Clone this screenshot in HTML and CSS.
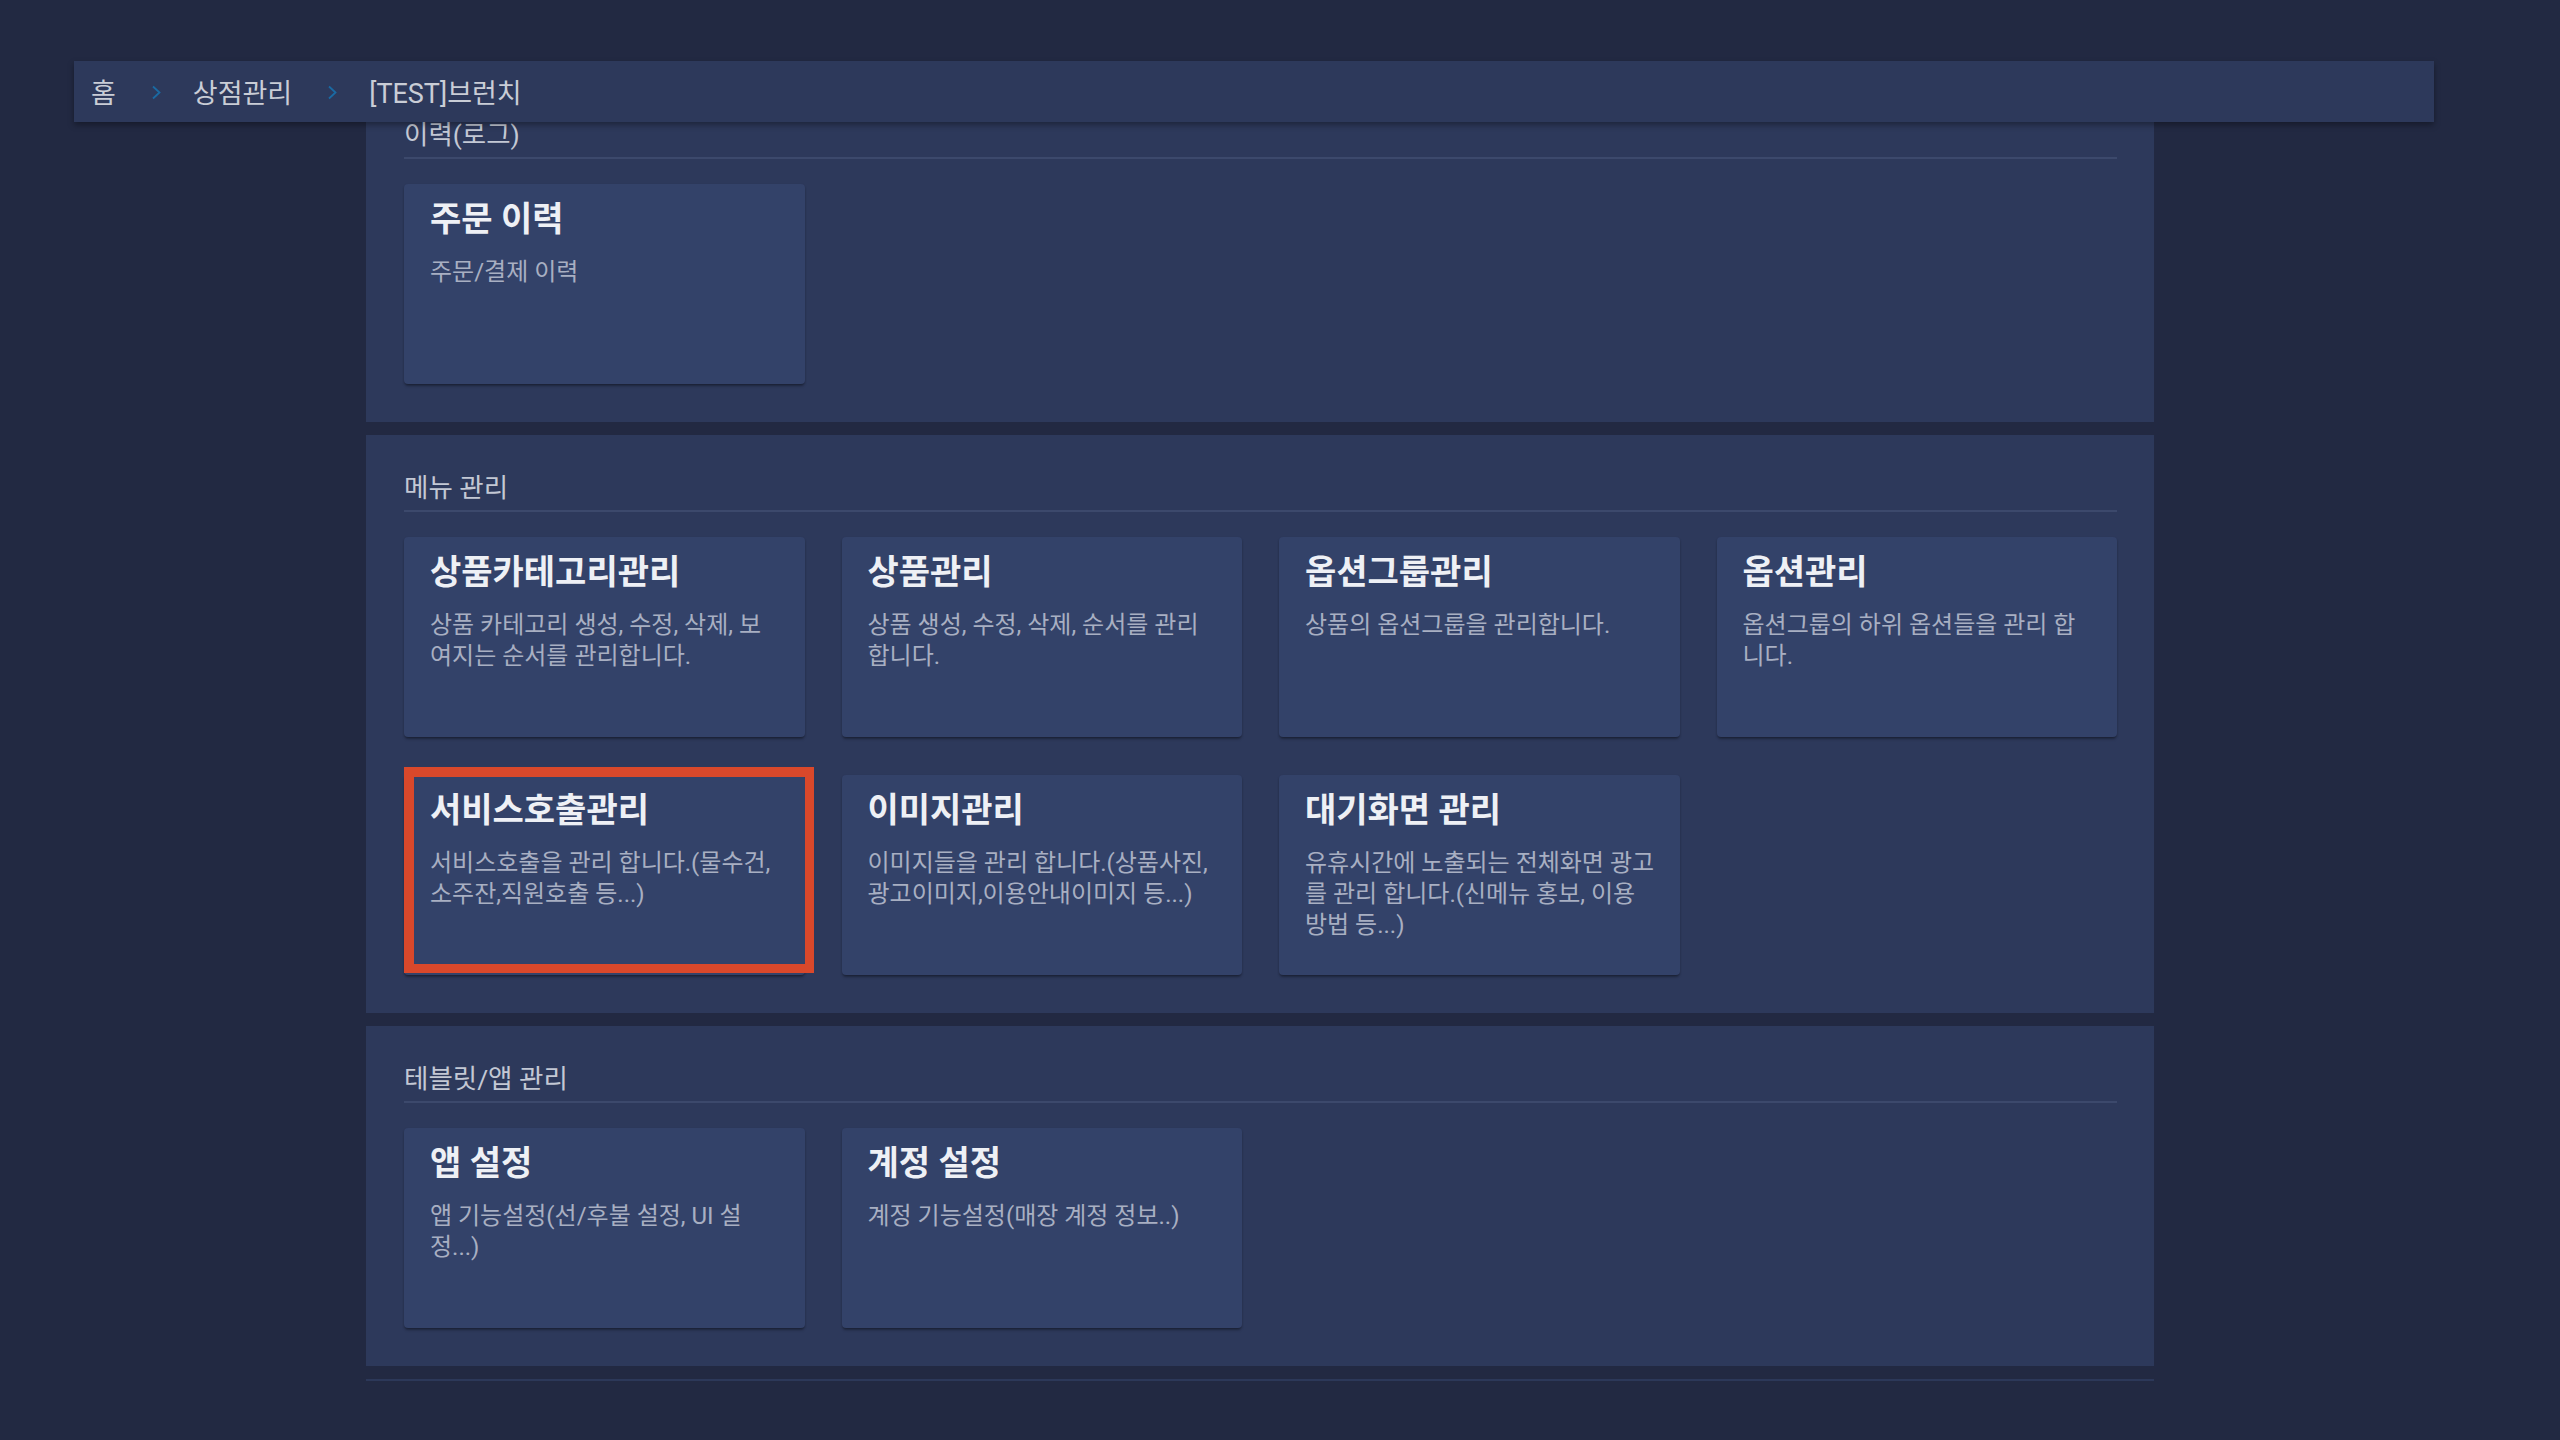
FILE: index.html
```html
<!DOCTYPE html>
<html lang="ko">
<head>
<meta charset="utf-8">
<title>상점관리 - [TEST]브런치</title>
<link rel="stylesheet" href="styles.css">
</head>
<body>
<header class="crumbs">
  <span class="crumb">홈</span>
  <svg class="sep" viewBox="0 0 13 14"><polyline points="3,1 9.5,7 3,13"/></svg>
  <span class="crumb">상점관리</span>
  <svg class="sep" viewBox="0 0 13 14"><polyline points="3,1 9.5,7 3,13"/></svg>
  <span class="crumb">[TEST]브런치</span>
</header>

<main class="content">
  <section class="group">
    <h2 class="group-title">이력(로그)</h2>
    <div class="cards">
      <div class="card"><h3 class="card-title">주문 이력</h3><p class="card-desc">주문/결제 이력</p></div>
    </div>
  </section>

  <section class="group">
    <h2 class="group-title">메뉴 관리</h2>
    <div class="cards">
      <div class="card"><h3 class="card-title">상품카테고리관리</h3><p class="card-desc">상품 카테고리 생성, 수정, 삭제, 보여지는 순서를 관리합니다.</p></div>
      <div class="card"><h3 class="card-title">상품관리</h3><p class="card-desc">상품 생성, 수정, 삭제, 순서를 관리 합니다.</p></div>
      <div class="card"><h3 class="card-title">옵션그룹관리</h3><p class="card-desc">상품의 옵션그룹을 관리합니다.</p></div>
      <div class="card"><h3 class="card-title">옵션관리</h3><p class="card-desc">옵션그룹의 하위 옵션들을 관리 합니다.</p></div>
      <div class="card selected"><h3 class="card-title">서비스호출관리</h3><p class="card-desc">서비스호출을 관리 합니다.(물수건, 소주잔,직원호출 등...)</p></div>
      <div class="card"><h3 class="card-title">이미지관리</h3><p class="card-desc">이미지들을 관리 합니다.(상품사진, 광고이미지,이용안내이미지 등...)</p></div>
      <div class="card"><h3 class="card-title">대기화면 관리</h3><p class="card-desc">유휴시간에 노출되는 전체화면 광고를 관리 합니다.(신메뉴 홍보, 이용 방법 등...)</p></div>
    </div>
  </section>

  <section class="group">
    <h2 class="group-title">테블릿/앱 관리</h2>
    <div class="cards">
      <div class="card"><h3 class="card-title">앱 설정</h3><p class="card-desc">앱 기능설정(선/후불 설정, UI 설정...)</p></div>
      <div class="card"><h3 class="card-title">계정 설정</h3><p class="card-desc">계정 기능설정(매장 계정 정보..)</p></div>
    </div>
  </section>

  <div class="foot-line"></div>
</main>
</body>
</html>
```

FILE: styles.css
```css
html, body {
  margin: 0;
  padding: 0;
}

body {
  position: relative;
  width: 2560px;
  height: 1440px;
  overflow: hidden;
  background: #222942;
  font-family: Roboto, "Noto Sans CJK KR", sans-serif;
}

.crumbs {
  position: absolute;
  top: 61px;
  left: 74px;
  z-index: 2;
  box-sizing: border-box;
  width: 2360px;
  height: 61px;
  padding-left: 17px;
  display: flex;
  align-items: center;
  background: #2d395b;
  box-shadow: 0 3px 6px rgba(0, 0, 0, 0.35);
  color: #c9cdd6;
  font-size: 27px;
}

.sep {
  width: 13px;
  height: 15px;
  margin: 2px 30px 0 34px;
  fill: none;
  stroke: #1a6aa3;
  stroke-width: 1.8;
}

.content {
  width: 1788px;
  margin-left: 366px;
  padding-top: 82px;
  display: flex;
  flex-direction: column;
  gap: 13px;
}

.group {
  background: #2d395b;
  padding: 37px 37px 38px 38px;
}

.group-title {
  margin: 0 0 25px;
  padding-bottom: 6px;
  border-bottom: 2px solid #3c496c;
  font-size: 26.5px;
  line-height: 32px;
  font-weight: 400;
  color: #c3c8d4;
}

.cards {
  display: grid;
  grid-template-columns: repeat(4, 1fr);
  column-gap: 37px;
  row-gap: 38px;
}

.card {
  position: relative;
  box-sizing: border-box;
  height: 200px;
  padding: 15px 22.5px 0 26px;
  background: #334269;
  border-radius: 4px;
  box-shadow: 0 3px 3px -1px rgba(0, 0, 0, 0.3), 0 1px 2px rgba(0, 0, 0, 0.2);
}

.card.selected::after {
  content: "";
  position: absolute;
  top: -8px;
  left: 0;
  right: -9px;
  bottom: 2px;
  border: 10px solid #d9482b;
  border-right-width: 9px;
  border-bottom-width: 9px;
}

.card-title {
  margin: 0 0 18px;
  font-size: 34px;
  line-height: 40px;
  font-weight: 700;
  color: #eef0f5;
}

.card-desc {
  margin: 0;
  font-size: 24px;
  line-height: 31px;
  color: #a8afc2;
}

.foot-line {
  height: 2px;
  background: #2c3859;
}
```
